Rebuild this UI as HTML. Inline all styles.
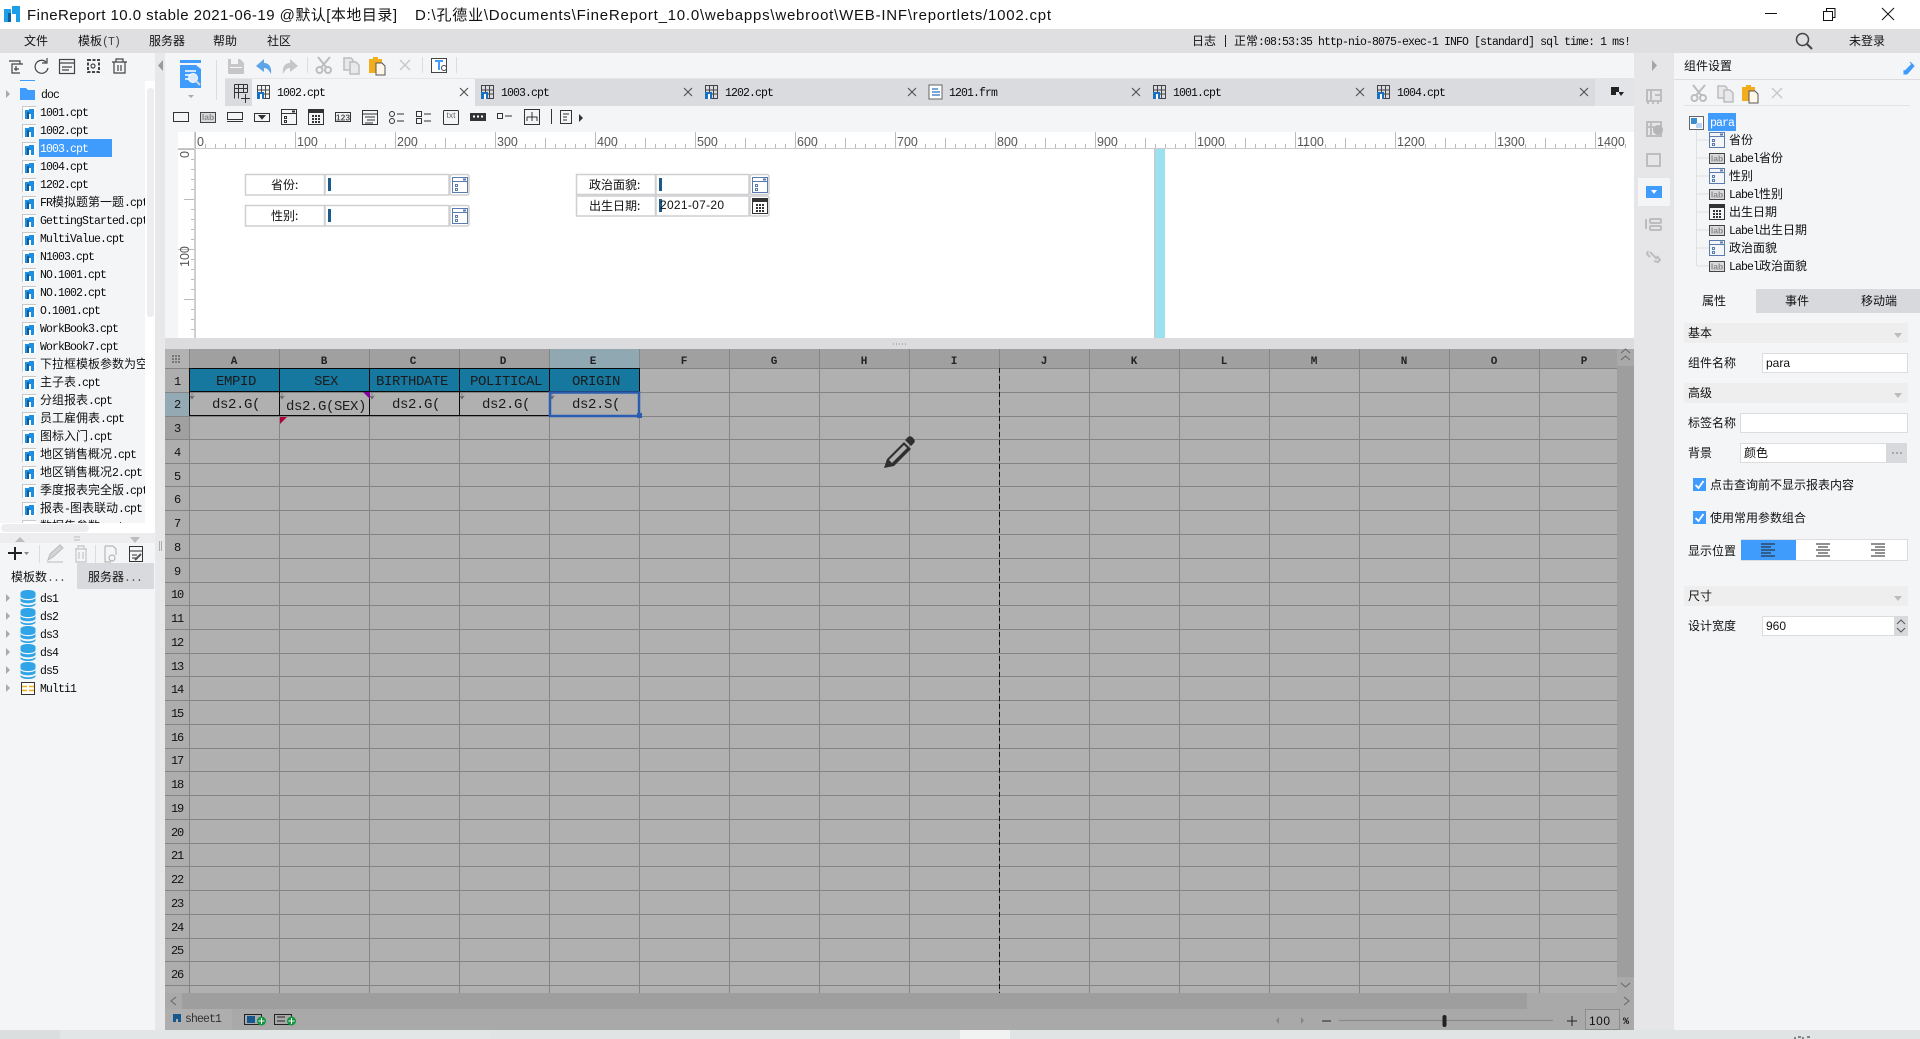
<!DOCTYPE html>
<html lang="zh"><head><meta charset="utf-8"><title>FineReport</title>
<style>
html,body{margin:0;padding:0;background:#f4f5f7;overflow:hidden}
svg{display:block}
text{white-space:pre}
.m{font:11.5px "Liberation Mono",monospace;letter-spacing:-.9px;fill:#0c0c0c}
.c,tspan.c{font:12px "Noto Sans CJK SC","Liberation Sans",sans-serif;letter-spacing:0;fill:#111}
.s{font:12px "Liberation Sans","Noto Sans CJK SC",sans-serif;fill:#111}
.r{font:12.5px "Liberation Sans",sans-serif;fill:#555}
.h{font:11px "Liberation Mono",monospace;font-weight:bold;fill:#222;text-anchor:middle}
.n{font:12px "Liberation Mono",monospace;fill:#111;text-anchor:middle;letter-spacing:-1.2px}
.b{font:14px "Liberation Mono",monospace;letter-spacing:-.4px;fill:#1b1b1b}
.l{font:bold 8.5px "Liberation Sans",sans-serif;fill:#888;text-anchor:middle}
</style></head><body>
<svg width="1920" height="1039" viewBox="0 0 1920 1039" xmlns="http://www.w3.org/2000/svg">
<defs>
<g id="fr"><rect width="14" height="14" fill="#fff"/><path d="M.5 14V.5H14" fill="none" stroke="#c9c9cc"/><path d="M3 4h4V3h5v10H9V8H7v5H3z" fill="#1d8fe3"/><path d="M5 6h2v7H5z" fill="#0f5c9c"/></g>
<g id="tab"><rect x=".5" y=".5" width="12" height="13" fill="none" stroke="#444"/><path d="M.5 5h12M.5 9h12M4.500 .5v13M8.500 .5v13" stroke="#444" fill="none"/><path d="M0 7h7v7H0z" fill="#1a6fc0"/><path d="M3 9h2v5H3z" fill="#fff"/></g>
<g id="win" fill="none" stroke="currentColor"><rect x=".5" y=".5" width="15" height="15"/><path d="M.5 4.500h15"/><rect x="3.500" y="7.500" width="2" height="2"/><rect x="3.500" y="11.500" width="2" height="2"/><rect x="11" y="1.500" width="3" height="2" fill="currentColor" stroke="none"/></g>
<g id="cal"><rect x=".5" y=".5" width="15" height="15" fill="none" stroke="#333"/><path d="M0 1h16v3H0z" fill="#333" stroke="none"/><path d="M4 6h2v2H4zM7 6h2v2H7zM10 6h2v2h-2zM4 9h2v2H4zM7 9h2v2H7zM10 9h2v2h-2zM4 12h2v2H4zM7 12h2v2H7zM10 12h2v2h-2z" fill="#333" stroke="none"/></g>
<g id="labbox"><rect x=".5" y=".5" width="15" height="10" fill="#d9d9dc" stroke="#444"/></g>
<g id="db"><path d="M0 3c0-4 15-4 15 0v3c0 4-15 4-15 0z" fill="#2fa4e6"/><path d="M0 8c2 3 13 3 15 0v3c-2 3-13 3-15 0z" fill="#2fa4e6"/><path d="M0 13c2 3 13 3 15 0v1c0 4-15 4-15 0z" fill="#2fa4e6"/></g>
<g id="arr"><path d="M0 -4l4 4-4 4z" fill="#aaa"/></g>
<g id="sci" fill="none" stroke="#bdbdc0" stroke-width="2"><circle cx="3.500" cy="13" r="3"/><circle cx="12" cy="13" r="3"/><path d="M2 0l8 10M14 0L5.500 10"/></g>
<g id="cpy"><path d="M1 1h7l2 2v10H1z" fill="#e9e9ec" stroke="#bdbdc0" stroke-width="1.500"/><path d="M7 5h6l3 3v9H7z" fill="#e9e9ec" stroke="#bdbdc0" stroke-width="1.500"/></g>
<g id="pst"><path d="M0 2h4V0h5v2h4v14H0z" fill="#f2ad1e"/><path d="M7 6h6l3 3v9H7z" fill="#fff8ea" stroke="#555"/></g>
<g id="xx"><path d="M0 0l10 10M10 0L0 10" stroke="#c9c9cc" stroke-width="1.500"/></g>
<g id="mx"><path d="M0 0l8 8M8 0L0 8" stroke="#555" stroke-width="1.200"/></g>
<pattern id="rx" x="195" y="132" width="100" height="16" patternUnits="userSpaceOnUse"><path d="M.5 0v16M10.500 12v4M20.500 12v4M30.500 12v4M40.500 12v4M50.500 6v10M60.500 12v4M70.500 12v4M80.500 12v4M90.500 12v4" stroke="#bbb" fill="none"/></pattern>
<pattern id="ry" x="178" y="149" width="17" height="100" patternUnits="userSpaceOnUse"><path d="M0 .5h17M13 10.500h4M13 20.500h4M13 30.500h4M13 40.500h4M6 50.500h11M13 60.500h4M13 70.500h4M13 80.500h4M13 90.500h4" stroke="#bbb" fill="none"/></pattern>
</defs>

<rect width="1920" height="1039" fill="#f4f5f7"/>
<!-- title bar -->
<rect width="1920" height="29" fill="#fff"/>
<path d="M4 9h7v4H8v9H4z" fill="#1d9fe8"/><path d="M8 13h3v9H8z" fill="#0f5c9c"/><path d="M12 6h8v16h-4v-8h-4z" fill="#1d9fe8"/>
<text x="27" y="20" class="s" style="font-size:15px" textLength="370" lengthAdjust="spacing">FineReport 10.0 stable 2021-06-19 @默认[本地目录]</text>
<text x="415" y="20" class="s" style="font-size:15px" textLength="636" lengthAdjust="spacing">D:\孔德业\Documents\FineReport_10.0\webapps\webroot\WEB-INF\reportlets/1002.cpt</text>
<path d="M1765 13.500h12" stroke="#111" stroke-width="1"/>
<path d="M1823.500 11.500h9v9h-9zM1826.500 11V8.500h8.500v9H1833" fill="none" stroke="#111"/>
<path d="M1882 8l12 12M1894 8l-12 12" stroke="#111"/>
<!-- menu -->
<rect y="29" width="1920" height="24" fill="#dfdfe1"/>
<text x="24" y="45" class="c">文件</text>
<text x="78" y="45" class="c">模板<tspan class="m" style="fill:#444">(T)</tspan></text>
<text x="149" y="45" class="c">服务器</text>
<text x="213" y="45" class="c">帮助</text>
<text x="267" y="45" class="c">社区</text>
<text x="1192" y="45" class="c">日志</text>
<path d="M1225.500 35v12" stroke="#222"/>
<text x="1234" y="45" class="c">正常<tspan class="m">:08:53:35 http-nio-8075-exec-1 INFO [standard] sql time: 1 ms!</tspan></text>
<circle cx="1802.500" cy="39.500" r="6" fill="none" stroke="#444" stroke-width="1.500"/><path d="M1807 44l5 5" stroke="#444" stroke-width="2"/>
<text x="1849" y="45" class="c">未登录</text>

<!-- left panel -->
<rect y="53" width="155" height="977" fill="#f4f5f7"/>
<rect x="155" y="53" width="10" height="977" fill="#e8e8ea"/>
<g fill="none" stroke="#444" stroke-width="1.200">
<path d="M9 61h11v3M23 64H12v9h8M16 66v5M14 69h5"/>
<path d="M46 62a6.500 6.500 0 1 0 2 6M47 58v5h-5"/>
<rect x="59.500" y="59.500" width="15" height="14"/><path d="M59 63h15M62 67h10M62 70h7"/>
<rect x="88" y="60" width="11" height="12" stroke-dasharray="3 1.500" stroke-width="2"/><circle cx="93" cy="66" r="2"/>
<path d="M112 62h15M116 62v-3h7v3M114 62v11h11V62M118 65v6M121 65v6"/>
</g>
<path d="M163 60v11l-5-5.500z" fill="#9a9a9d"/>
<!-- tree -->
<use href="#arr" x="6" y="94"/>
<path d="M20 88h6l2 2h7v10H20z" fill="#3f9bfc"/>
<rect x="20" y="80" width="15" height="1" fill="#3f9bfc"/>
<text x="41" y="98" class="m">doc</text>
<use href="#fr" x="22" y="106"/><text x="40" y="116" class="m">1001.cpt</text>
<use href="#fr" x="22" y="124"/><text x="40" y="134" class="m">1002.cpt</text>
<use href="#fr" x="22" y="142"/><rect x="39" y="139" width="73" height="18" fill="#3f9bfc"/><text x="40" y="152" class="m" style="fill:#fff">1003.cpt</text>
<use href="#fr" x="22" y="160"/><text x="40" y="170" class="m">1004.cpt</text>
<use href="#fr" x="22" y="178"/><text x="40" y="188" class="m">1202.cpt</text>
<use href="#fr" x="22" y="196"/><text x="40" y="206" class="m">FR<tspan class="c">模拟题第一题</tspan>.cpt</text>
<use href="#fr" x="22" y="214"/><text x="40" y="224" class="m">GettingStarted.cpt</text>
<use href="#fr" x="22" y="232"/><text x="40" y="242" class="m">MultiValue.cpt</text>
<use href="#fr" x="22" y="250"/><text x="40" y="260" class="m">N1003.cpt</text>
<use href="#fr" x="22" y="268"/><text x="40" y="278" class="m">NO.1001.cpt</text>
<use href="#fr" x="22" y="286"/><text x="40" y="296" class="m">NO.1002.cpt</text>
<use href="#fr" x="22" y="304"/><text x="40" y="314" class="m">O.1001.cpt</text>
<use href="#fr" x="22" y="322"/><text x="40" y="332" class="m">WorkBook3.cpt</text>
<use href="#fr" x="22" y="340"/><text x="40" y="350" class="m">WorkBook7.cpt</text>
<use href="#fr" x="22" y="358"/><text x="40" y="368" class="c">下拉框模板参数为空</text>
<use href="#fr" x="22" y="376"/><text x="40" y="386" class="m"><tspan class="c">主子表</tspan>.cpt</text>
<use href="#fr" x="22" y="394"/><text x="40" y="404" class="m"><tspan class="c">分组报表</tspan>.cpt</text>
<use href="#fr" x="22" y="412"/><text x="40" y="422" class="m"><tspan class="c">员工雇佣表</tspan>.cpt</text>
<use href="#fr" x="22" y="430"/><text x="40" y="440" class="m"><tspan class="c">图标入门</tspan>.cpt</text>
<use href="#fr" x="22" y="448"/><text x="40" y="458" class="m"><tspan class="c">地区销售概况</tspan>.cpt</text>
<use href="#fr" x="22" y="466"/><text x="40" y="476" class="m"><tspan class="c">地区销售概况</tspan>2.cpt</text>
<use href="#fr" x="22" y="484"/><text x="40" y="494" class="m"><tspan class="c">季度报表完全版</tspan>.cpt</text>
<use href="#fr" x="22" y="502"/><text x="40" y="512" class="m"><tspan class="c">报表</tspan>-<tspan class="c">图表联动</tspan>.cpt</text>
<use href="#fr" x="22" y="520"/><text x="40" y="530" class="m"><tspan class="c">数据集参数</tspan>.cpt</text>
<rect x="145" y="81" width="10" height="442" fill="#fff"/>
<rect x="147" y="88" width="7" height="229" rx="3" fill="#ededef"/>
<rect y="523" width="155" height="10" fill="#fff"/>
<rect x="1" y="524" width="88" height="8" rx="4" fill="#ededef"/>
<rect y="533" width="155" height="10" fill="#ededef"/>
<path d="M15 542l5-5 5 5zM130 537h10l-5 6z" fill="#bcbcbf"/><path d="M74 537h6M74 540h6" stroke="#bbb"/>
<path d="M159.500 541v10M161.500 541v10" stroke="#aaa"/>
<!-- data toolbar -->
<path d="M8 553h14M15 547v13" stroke="#222" stroke-width="2"/><path d="M24 552h5l-2.500 3z" fill="#888"/>
<path d="M39.500 545v18M95.500 545v18" stroke="#ddd"/>
<path d="M48 560l2-6 10-9 3 3-10 9zM47 562h16" fill="#d4d4d6" stroke="#bbb"/>
<path d="M75 549h12M78 549v-3h6v3M76 549v13h10v-13M79 552v7M83 552v7" fill="none" stroke="#c4c4c7" stroke-width="1.200"/>
<path d="M105 546h8l3 3v6M105 546v16h6" fill="none" stroke="#aaa"/><circle cx="112" cy="558" r="3" fill="none" stroke="#aaa"/>
<rect x="129.500" y="546.500" width="13" height="15" fill="none" stroke="#333"/><path d="M129 551h14M132 555h5M132 558h5" stroke="#333"/><path d="M135 560l6-6" stroke="#555" stroke-width="2"/>
<!-- data tabs -->
<rect y="563" width="77" height="26" fill="#f4f5f7"/><rect x="77" y="563" width="77" height="26" fill="#d9dadd"/>
<text x="11" y="581" class="c">模板数<tspan class="m" style="fill:#555">...</tspan></text>
<text x="88" y="581" class="c">服务器<tspan class="m" style="fill:#555">...</tspan></text>
<use href="#arr" x="6" y="598"/><use href="#db" x="20.500" y="590"/><text x="40" y="602" class="m">ds1</text>
<use href="#arr" x="6" y="616"/><use href="#db" x="20.500" y="608"/><text x="40" y="620" class="m">ds2</text>
<use href="#arr" x="6" y="634"/><use href="#db" x="20.500" y="626"/><text x="40" y="638" class="m">ds3</text>
<use href="#arr" x="6" y="652"/><use href="#db" x="20.500" y="644"/><text x="40" y="656" class="m">ds4</text>
<use href="#arr" x="6" y="670"/><use href="#db" x="20.500" y="662"/><text x="40" y="674" class="m">ds5</text>
<use href="#arr" x="6" y="688"/><rect x="21.500" y="682.500" width="13" height="12" fill="#fff" stroke="#333"/><path d="M22 686.500h5M29 686.500h5M22 690.500h5M29 690.500h5" stroke="#f2ad1e" stroke-width="1.500"/><text x="40" y="692" class="m">Multi1</text>

<!-- main toolbar -->
<path d="M180 60h21v3h-21z" fill="#3f9bfc"/>
<path d="M180 65h16l5 4v19h-21z" fill="#3f9bfc"/>
<path d="M185 71h11M185 75h6M185 79h5" stroke="#fff" stroke-width="1.500"/>
<circle cx="193" cy="78" r="4.500" fill="#dceafa" stroke="#fff"/><path d="M196 81l4 4" stroke="#d8d8d8" stroke-width="2"/>
<path d="M188 95h6l-3 3z" fill="#aaa"/>
<path d="M216.500 60v40" stroke="#ddd"/>
<path d="M228 59h12l4 4v10q0 1-1 1h-14q-1 0-1-1z" fill="#c6c6c9"/><path d="M231 59h7v5h-7zM230 67h12v1h-12z" fill="#f4f5f7"/>
<path d="M256 66l8-7v4c5 0 8 4 7 11-2-4-4-6-7-6v4z" fill="#5da4e8"/>
<path d="M298 66l-8-7v4c-5 0-8 4-7 11 2-4 4-6 7-6v4z" fill="#c6c6c9"/>
<path d="M307.500 57v16M422.500 57v16M456.500 57v16" stroke="#ddd"/>
<use href="#sci" x="316" y="57"/>
<use href="#cpy" x="343" y="57"/>
<use href="#pst" x="369" y="57"/>
<use href="#xx" x="400" y="60"/>
<rect x="431.500" y="58.500" width="15" height="14" fill="#fff" stroke="#444"/><path d="M435 61h8M439 61v9" stroke="#3f9bfc" stroke-width="2"/><circle cx="444" cy="68" r="2.500" fill="none" stroke="#444"/>
<!-- tabs -->
<rect x="225" y="78" width="1370" height="28" fill="#dadbdf"/>
<rect x="1595" y="78" width="39" height="28" fill="#e3e4e7"/>
<rect x="252" y="79" width="223" height="27" fill="#f4f5f7"/>
<rect x="225" y="78" width="1370" height="1" fill="#e6e6e9"/>
<path d="M234.500 84.500h13M234.500 88.500h13M234.500 92.500h13M234.500 84.500v14M238.500 84.500v14M243.500 84.500v8M247.500 84.500v8M241 98.500h9M245.500 94v9" stroke="#333" fill="none"/>
<use href="#tab" x="257" y="85"/><text x="277" y="96" class="m">1002.cpt</text><use href="#mx" x="460" y="88"/>
<use href="#tab" x="481" y="85"/><text x="501" y="96" class="m">1003.cpt</text><use href="#mx" x="684" y="88"/>
<use href="#tab" x="705" y="85"/><text x="725" y="96" class="m">1202.cpt</text><use href="#mx" x="908" y="88"/>
<rect x="929" y="85" width="13" height="14" fill="#fff" stroke="#666"/><path d="M932 89h6M932 92h8M932 95h8" stroke="#2f6fc0" stroke-width="1.200"/><text x="949" y="96" class="m">1201.frm</text><use href="#mx" x="1132" y="88"/>
<use href="#tab" x="1153" y="85"/><text x="1173" y="96" class="m">1001.cpt</text><use href="#mx" x="1356" y="88"/>
<use href="#tab" x="1377" y="85"/><text x="1397" y="96" class="m">1004.cpt</text><use href="#mx" x="1580" y="88"/>
<path d="M1611 87h8v5h5l-3 4-2-3v-1h-3v3h-5z" fill="#222"/>
<!-- component toolbar -->
<g fill="none" stroke="#333">
<rect x="173.500" y="112.500" width="15" height="9"/>
<use href="#labbox" x="200" y="112"/>
<path d="M227.500 112.500h15v7h-15zM227 121.500h16"/>
<rect x="254.500" y="113.500" width="15" height="8"/><path d="M259 115.500h6l-3 3.500z" fill="#333"/>
<use href="#win" x="281" y="109" color="#333"/>
<use href="#cal" x="308" y="109"/>
<rect x="335.500" y="112.500" width="15" height="9"/>
<rect x="362.500" y="110.500" width="15" height="14"/><path d="M362 114h16M365 117h10M367 120h8M365 123h8"/>
<circle cx="392" cy="114" r="2.500"/><circle cx="392" cy="121" r="2.500"/><path d="M397 114h7M397 121h7"/>
<rect x="416.500" y="111.500" width="5" height="5"/><rect x="416.500" y="118.500" width="5" height="5"/><path d="M424 114h7M424 121h7"/>
<rect x="443.500" y="110.500" width="15" height="14" rx="1"/>
<rect x="470.500" y="113.500" width="15" height="7" fill="#333"/>
<rect x="497.500" y="113.500" width="5" height="5"/><path d="M505 116h7"/>
<rect x="524.500" y="109.500" width="15" height="15"/><path d="M532 112v5M527 117h10v4M527 117v4M532 117v4"/>
<path d="M551.500 109v15"/>
<rect x="560.500" y="110.500" width="11" height="13"/><path d="M563 114h6M563 117h4M563 120h4"/>
</g>
<text x="208" y="120" class="l">lab</text>
<text x="343" y="120.500" class="l" style="fill:#555">123</text>
<text x="451" y="118" class="l" style="font-weight:normal;fill:#666">txt</text>
<path d="M473 115.500h2v2h-2zM477 115.500h2v2h-2zM481 115.500h2v2h-2z" fill="#fff"/>
<path d="M579 114v8l4-4z" fill="#333"/>
<!-- rulers -->
<rect x="178" y="132" width="1456" height="206" fill="#fff"/>
<rect x="195" y="132" width="1439" height="16" fill="url(#rx)"/>
<rect x="178" y="149" width="17" height="189" fill="url(#ry)"/>
<rect x="178" y="148" width="1439" height="1" fill="#ccc"/>
<path d="M194.500 132v206M195.500 149v189" stroke="#cfcfd2"/>
<g class="r">
<text x="197" y="146" class="r">0</text><text x="297" y="146" class="r">100</text><text x="397" y="146" class="r">200</text><text x="497" y="146" class="r">300</text><text x="597" y="146" class="r">400</text><text x="697" y="146" class="r">500</text><text x="797" y="146" class="r">600</text><text x="897" y="146" class="r">700</text><text x="997" y="146" class="r">800</text><text x="1097" y="146" class="r">900</text><text x="1197" y="146" class="r">1000</text><text x="1297" y="146" class="r">1100</text><text x="1397" y="146" class="r">1200</text><text x="1497" y="146" class="r">1300</text><text x="1597" y="146" class="r">1400</text>
</g>
<text transform="translate(189 158) rotate(-90)" class="r">0</text>
<text transform="translate(189 267) rotate(-90)" class="r">100</text>
<!-- cyan guide -->
<rect x="1154" y="149" width="1.500" height="189" fill="#c9c9cc"/>
<rect x="1155.500" y="149" width="9.500" height="189" fill="#9be2f1"/>
<!-- form widgets -->
<g fill="#fff" stroke="#cfcfd2" stroke-width="1.500">
<rect x="245.500" y="174.500" width="79" height="20.500"/><rect x="325" y="174.500" width="124" height="20.500"/><rect x="450" y="174.500" width="19" height="20.500" rx="2"/>
<rect x="245.500" y="205.500" width="79" height="20.500"/><rect x="325" y="205.500" width="124" height="20.500"/><rect x="450" y="205.500" width="19" height="20.500" rx="2"/>
<rect x="576.500" y="174.500" width="79" height="20"/><rect x="656" y="174.500" width="93" height="20"/><rect x="750" y="174.500" width="19" height="20" rx="2"/>
<rect x="576.500" y="196" width="79" height="20"/><rect x="656" y="196" width="93" height="20"/><rect x="750" y="196" width="19" height="20" rx="2"/>
</g>
<use href="#win" x="452" y="177" color="#5a7ab0"/>
<use href="#win" x="452" y="208" color="#5a7ab0"/>
<use href="#win" x="752" y="177" color="#5a7ab0"/>
<use href="#cal" x="752" y="198"/>
<text x="271" y="189" class="c">省份:</text>
<text x="271" y="220" class="c">性别:</text>
<text x="589" y="189" class="c">政治面貌:</text>
<text x="589" y="210" class="c">出生日期:</text>
<path d="M328 178h3v13h-3zM328 209h3v13h-3zM659 178h3v13h-3zM659 199h3v13h-3z" fill="#1c5a8a"/>
<text x="660" y="209" class="s" textLength="64" lengthAdjust="spacing">2021-07-20</text>
<!-- splitter -->
<rect x="165" y="338" width="1469" height="11" fill="#dcdcde"/>
<path d="M893 344h1M896 344h1M899 344h1M902 344h1M905 344h1" stroke="#888"/>
<!-- grid -->
<rect x="165" y="349" width="1469" height="681" fill="#a9a9a9"/>
<rect x="189" y="368" width="1428" height="625" fill="#b0b0b0"/>
<rect x="189" y="349" width="1428" height="19" fill="#a0a0a0"/>
<rect x="549" y="349" width="90" height="19" fill="#90a8b2"/>
<rect x="165" y="349" width="24" height="19" fill="#b2b2b2"/>
<rect x="165" y="368" width="24" height="625" fill="#adadad"/>
<rect x="165" y="392" width="24" height="24" fill="#93a9b3"/>
<rect x="165" y="416" width="24" height="23" fill="#a0a0a0"/>
<path d="M172 355h2v2h-2zM175 355h2v2h-2zM178 355h2v2h-2zM172 358h2v2h-2zM175 358h2v2h-2zM178 358h2v2h-2zM172 361h2v2h-2zM175 361h2v2h-2zM178 361h2v2h-2z" fill="#777"/>
<path d="M165 368.500H1617M165 392.500H1617M165 416.500H1617M165 439.500H1617M165 463.500H1617M165 486.500H1617M165 510.500H1617M165 534.500H1617M165 558.500H1617M165 582.500H1617M165 605.500H1617M165 629.500H1617M165 653.500H1617M165 676.500H1617M165 700.500H1617M165 724.500H1617M165 748.500H1617M165 771.500H1617M165 795.500H1617M165 819.500H1617M165 843.500H1617M165 866.500H1617M165 890.500H1617M165 914.500H1617M165 938.500H1617M165 961.500H1617M165 985.500H1617" stroke="#848484" fill="none"/>
<path d="M189.500 349V993M279.500 349V993M369.500 349V993M459.500 349V993M549.500 349V993M639.500 349V993M729.500 349V993M819.500 349V993M909.500 349V993M999.500 349V993M1089.500 349V993M1179.500 349V993M1269.500 349V993M1359.500 349V993M1449.500 349V993M1539.500 349V993" stroke="#858585" fill="none"/>
<path d="M999.500 368V993" stroke="#111" stroke-dasharray="5 3"/>
<text x="234" y="364" class="h">A</text><text x="324" y="364" class="h">B</text><text x="413" y="364" class="h">C</text><text x="503" y="364" class="h">D</text><text x="593" y="364" class="h">E</text><text x="684" y="364" class="h">F</text><text x="774" y="364" class="h">G</text><text x="864" y="364" class="h">H</text><text x="954" y="364" class="h">I</text><text x="1044" y="364" class="h">J</text><text x="1134" y="364" class="h">K</text><text x="1224" y="364" class="h">L</text><text x="1314" y="364" class="h">M</text><text x="1404" y="364" class="h">N</text><text x="1494" y="364" class="h">O</text><text x="1584" y="364" class="h">P</text>
<text x="177" y="385" class="n">1</text><text x="177" y="408" class="n">2</text><text x="177" y="432" class="n">3</text><text x="177" y="456" class="n">4</text><text x="177" y="480" class="n">5</text><text x="177" y="503" class="n">6</text><text x="177" y="527" class="n">7</text><text x="177" y="551" class="n">8</text><text x="177" y="575" class="n">9</text><text x="177" y="598" class="n">10</text><text x="177" y="622" class="n">11</text><text x="177" y="646" class="n">12</text><text x="177" y="670" class="n">13</text><text x="177" y="693" class="n">14</text><text x="177" y="717" class="n">15</text><text x="177" y="741" class="n">16</text><text x="177" y="764" class="n">17</text><text x="177" y="788" class="n">18</text><text x="177" y="812" class="n">19</text><text x="177" y="836" class="n">20</text><text x="177" y="859" class="n">21</text><text x="177" y="883" class="n">22</text><text x="177" y="907" class="n">23</text><text x="177" y="931" class="n">24</text><text x="177" y="954" class="n">25</text><text x="177" y="978" class="n">26</text>
<!-- data cells -->
<rect x="189" y="368" width="451" height="24" fill="#16789f"/>
<path d="M189.500 368.500H639.500V415.500H189.500ZM189 391.500H640M279.500 368V416M369.500 368V416M459.500 368V416M549.500 368V416" fill="none" stroke="#0a0a0a"/>
<text x="216" y="385" class="b">EMPID</text>
<text x="314" y="385" class="b">SEX</text>
<text x="376" y="385" class="b">BIRTHDATE</text>
<text x="470" y="385" class="b">POLITICAL</text>
<text x="572" y="385" class="b">ORIGIN</text>
<text x="212" y="408" class="b">ds2.G(</text>
<text x="286" y="410" class="b">ds2.G(SEX)</text>
<text x="392" y="408" class="b">ds2.G(</text>
<text x="482" y="408" class="b">ds2.G(</text>
<text x="572" y="408" class="b">ds2.S(</text>
<path d="M192 393v4l-2-1 2 3 2-3-2 1M282 393v4l-2-1 2 3 2-3-2 1M372 393v4l-2-1 2 3 2-3-2 1M462 393v4l-2-1 2 3 2-3-2 1M552 393v4l-2-1 2 3 2-3-2 1" fill="#666" stroke="#666" stroke-width=".6"/>
<path d="M280 417h7l-7 7z" fill="#b0003a"/>
<path d="M363 392h7v7z" fill="#8000a0"/>
<rect x="550" y="392.500" width="89" height="23.500" fill="none" stroke="#2a5db0" stroke-width="2.500"/>
<rect x="637" y="413" width="5" height="5" fill="#2a5db0"/>
<!-- pencil -->
<path d="M884 468l3-9 17-17 7 7-17 17zM905 440l3-3q2-1.500 4 0l2 2q1.500 2 0 4l-3 3z" fill="#2f2f2f"/>
<path d="M889 460l15-15 3 3-15 15z" fill="#b0b0b0"/>
<!-- scrollbars -->
<rect x="1617" y="349" width="17" height="644" fill="#a9a9a9"/>
<rect x="1617" y="366" width="17" height="611" fill="#9e9e9e"/>
<path d="M1621 360l4.500-4 4.500 4M1621 990l4.500 4 4.500-4" fill="none" stroke="#666" transform="translate(0 -7)"/>
<path d="M1621 360l4.500-4 4.500 4" fill="none" stroke="#666"/>
<rect x="165" y="993" width="1469" height="16" fill="#a9a9a9"/>
<rect x="182" y="993" width="1345" height="16" fill="#9e9e9e"/>
<path d="M176 997l-5 4 5 4M1624 997l5 4-5 4" fill="none" stroke="#666"/>
<!-- sheet bar -->
<rect x="165" y="1009" width="67" height="21" fill="#aeaeae"/>
<path d="M173 1014h8v8h-3v-3h-2v3h-3z" fill="#15588f"/>
<text x="185" y="1022" class="m" style="fill:#333">sheet1</text>
<rect x="244.500" y="1014.500" width="17" height="10" fill="none" stroke="#222"/><path d="M247 1016h8v7h-8z" fill="#15588f"/>
<circle cx="261.500" cy="1021" r="4.500" fill="#12963f"/><path d="M258.500 1021h6M261.500 1018v6" stroke="#fff"/>
<rect x="274.500" y="1014.500" width="17" height="10" fill="none" stroke="#222"/><path d="M277 1017h8M277 1021h8" stroke="#222"/>
<circle cx="291.500" cy="1021" r="4.500" fill="#12963f"/><path d="M288.500 1021h6M291.500 1018v6" stroke="#fff"/>
<path d="M1279 1017v7l-3-3.500zM1301 1017v7l3-3.500z" fill="#858585"/>
<path d="M1322 1021h9" stroke="#222"/>
<path d="M1339 1020.500h214" stroke="#8a8a8a" stroke-width="1.200"/>
<rect x="1442.500" y="1015" width="4" height="12" rx="2" fill="#222"/>
<path d="M1567 1021h10M1572 1016v10" stroke="#222"/>
<rect x="1585.500" y="1009.500" width="34" height="20" fill="#aeaeae" stroke="#8c8c8c"/>
<text x="1589" y="1025" class="s" textLength="21">100</text>
<text x="1623" y="1024" class="m" style="font-size:10px;font-weight:bold;letter-spacing:0">%</text>
<!-- bottom strip -->
<rect y="1030" width="1920" height="9" fill="#e3e6e6"/>
<rect y="1030" width="60" height="9" fill="#dadedf"/>
<rect x="490" y="1030" width="1430" height="9" fill="#e1e4e4"/>
<rect x="960" y="1030" width="50" height="9" fill="#f1f2f2"/>
<path d="M1795 1039v-2M1798 1037h3M1803 1039v-2M1807 1037h3" stroke="#222"/>

<!-- side strip -->
<rect x="1634" y="53" width="40" height="977" fill="#e6e6e8"/>
<path d="M1652 60v11l5-5.500z" fill="#a5a5a8"/>
<g fill="none" stroke="#bdbdc0" stroke-width="2">
<path d="M1647 90h14v11h-14zM1651 90v11M1655 95h6M1648 101v3M1653 101v3M1658 101v3"/>
<path d="M1647 122h14v14h-14zM1647 127h7M1651 122v14"/>
<rect x="1647" y="154" width="13" height="12"/>
<rect x="1650" y="219" width="11" height="4" rx="1"/><rect x="1650" y="226" width="11" height="4" rx="1"/><path d="M1647 220h-1v8h1"/>
<path d="M1648 251l-1 3 3 3M1654 261l4 1 2-2-3-4M1650 252l7 7"/>
</g>
<circle cx="1658" cy="130" r="5" fill="#b5b5b8"/>
<rect x="1638" y="178" width="32" height="28" fill="#f4f5f7"/>
<rect x="1646" y="186" width="16" height="12" fill="#3f9bfc"/><path d="M1651 190h6l-3 4z" fill="#fff"/>
<!-- right panel -->
<text x="1684" y="70" class="c">组件设置</text>
<path d="M1904 74h3l7-8-2-2-7 7zM1904 74v-4" fill="#3f9bfc" stroke="#3f9bfc"/><path d="M1910 62l3 3" stroke="#3f9bfc"/>
<path d="M1674 79.500h246" stroke="#dcdcde"/>
<use href="#sci" x="1691" y="85"/><use href="#cpy" x="1717" y="85"/><use href="#pst" x="1742" y="85"/><use href="#xx" x="1772" y="88"/>
<path d="M1684 105.500h226" stroke="#e2e2e4"/>
<path d="M1696.500 130v136M1697 140h12M1697 158h12M1697 176h12M1697 194h12M1697 212h12M1697 230h12M1697 248h12M1697 266h12" stroke="#e0e0e2" fill="none"/>
<rect x="1689.500" y="116.500" width="14" height="13" fill="#fff" stroke="#666"/><rect x="1691" y="118" width="6" height="6" fill="#3a8ecf"/><rect x="1696" y="123" width="6" height="5" fill="#b9d4f2"/>
<rect x="1708" y="113" width="28" height="18" fill="#3f9bfc"/><text x="1710" y="126" class="m" style="fill:#fff">para</text>
<use href="#win" x="1709" y="132" color="#5a7ab0"/><text x="1729" y="144" class="c">省份</text>
<use href="#labbox" x="1709" y="153"/><text x="1717" y="161.500" class="l">lab</text><text x="1729" y="162" class="m">Label<tspan class="c">省份</tspan></text>
<use href="#win" x="1709" y="168" color="#5a7ab0"/><text x="1729" y="180" class="c">性别</text>
<use href="#labbox" x="1709" y="189"/><text x="1717" y="197.500" class="l">lab</text><text x="1729" y="198" class="m">Label<tspan class="c">性别</tspan></text>
<use href="#cal" x="1709" y="204"/><text x="1729" y="216" class="c">出生日期</text>
<use href="#labbox" x="1709" y="225"/><text x="1717" y="233.500" class="l">lab</text><text x="1729" y="234" class="m">Label<tspan class="c">出生日期</tspan></text>
<use href="#win" x="1709" y="240" color="#5a7ab0"/><text x="1729" y="252" class="c">政治面貌</text>
<use href="#labbox" x="1709" y="261"/><text x="1717" y="269.500" class="l">lab</text><text x="1729" y="270" class="m">Label<tspan class="c">政治面貌</tspan></text>
<!-- property tabs -->
<rect x="1756" y="289" width="164" height="24" fill="#d8d9dd"/>
<text x="1702" y="305" class="c">属性</text><text x="1785" y="305" class="c">事件</text><text x="1861" y="305" class="c">移动端</text>
<g fill="#eeeeef"><rect x="1684" y="323" width="224" height="20"/><rect x="1684" y="383" width="224" height="20"/><rect x="1684" y="586" width="224" height="20"/></g>
<path d="M1894 333h8l-4 5zM1894 393h8l-4 5zM1894 596h8l-4 5z" fill="#bcbcbf"/>
<text x="1688" y="337" class="c">基本</text>
<text x="1688" y="397" class="c">高级</text>
<text x="1688" y="600" class="c">尺寸</text>
<text x="1688" y="367" class="c">组件名称</text>
<text x="1688" y="427" class="c">标签名称</text>
<text x="1688" y="457" class="c">背景</text>
<text x="1688" y="555" class="c">显示位置</text>
<text x="1688" y="630" class="c">设计宽度</text>
<g fill="#fff" stroke="#dcdcde"><rect x="1762.500" y="353.500" width="145" height="19"/><rect x="1740.500" y="413.500" width="167" height="19"/><rect x="1740.500" y="443.500" width="146" height="19"/><rect x="1762.500" y="616.500" width="132" height="19"/></g>
<text x="1766" y="367" class="s">para</text>
<text x="1744" y="457" class="c">颜色</text>
<text x="1766" y="630" class="s">960</text>
<rect x="1886" y="443" width="21" height="20" fill="#d8d9dd"/><path d="M1892 453h2M1896 453h2M1900 453h2" stroke="#777"/>
<rect x="1693" y="478" width="13" height="13" fill="#3f9bfc"/><path d="M1695.500 485l3 3 5-7" fill="none" stroke="#fff" stroke-width="1.800"/>
<text x="1710" y="489" class="c">点击查询前不显示报表内容</text>
<rect x="1693" y="511" width="13" height="13" fill="#3f9bfc"/><path d="M1695.500 518l3 3 5-7" fill="none" stroke="#fff" stroke-width="1.800"/>
<text x="1710" y="522" class="c">使用常用参数组合</text>
<rect x="1741" y="539" width="167" height="22" fill="#dcdcde"/>
<rect x="1741" y="540" width="166" height="20" fill="#fff"/>
<rect x="1741" y="540" width="55" height="20" fill="#3f9bfc"/>
<path d="M1761 545h14M1761 548h10M1761 551h14M1761 554h10M1761 557h14" stroke="#222" transform="translate(0 -1)"/>
<path d="M1816 544h14M1818 547h10M1816 550h14M1818 553h10M1816 556h14" stroke="#222"/>
<path d="M1871 544h14M1875 547h10M1871 550h14M1875 553h10M1871 556h14" stroke="#222"/>
<rect x="1894" y="616" width="14" height="20" fill="#d8d9dd"/>
<path d="M1897 624l4-4 4 4M1897 628l4 4 4-4" fill="none" stroke="#555"/>
</svg>
</body></html>
